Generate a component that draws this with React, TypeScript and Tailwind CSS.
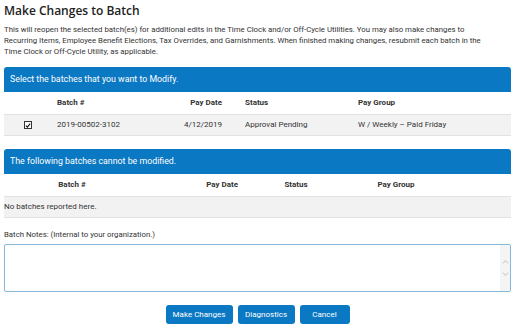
import React from 'react'

const blue = 'bg-[#0a78c2]'

function Checkbox() {
  return (
    <span className="inline-flex h-[8px] w-[8px] items-center justify-center border border-[#333] bg-white">
      <svg viewBox="0 0 10 10" className="h-[7px] w-[7px]">
        <path d="M1.5 5.2 L4 7.8 L8.6 1.8" fill="none" stroke="#111" strokeWidth="1.8" />
      </svg>
    </span>
  )
}

export default function App() {
  return (
    <div className="h-[329px] w-[515px] bg-white px-[4px] text-[#222]" style={{ fontFamily: 'Roboto, "Liberation Sans", sans-serif' }}>
      <h1
        className="pt-[2px] text-[12px] font-semibold leading-[17px] text-[#222]"
        style={{ fontFamily: '"Open Sans", "Liberation Sans", sans-serif' }}
      >
        Make Changes to Batch
      </h1>
      <p className="mt-[5px] pr-[10px] text-[7.8px] leading-[11px] text-[#333]">
        This will reopen the selected batch(es) for additional edits in the Time Clock and/or Off-Cycle Utilities. You may also make changes to
        <br />
        Recurring Items, Employee Benefit Elections, Tax Overrides, and Garnishments. When finished making changes, resubmit each batch in the
        <br />
        Time Clock or Off-Cycle Utility, as applicable.
      </p>

      {/* Modifiable batches */}
      <div className="mt-[10px]">
        <div className={`${blue} flex h-[25px] items-center rounded-t-[3px] px-[6px] text-[8.8px] text-white`}>
          Select the batches that you want to Modify.
        </div>
        <div className="grid h-[22px] grid-cols-[48px_120px_55px_126px_1fr] items-center text-[8px] font-bold text-[#333]">
          <div />
          <div className="pl-[5px]">Batch #</div>
          <div className="pr-[5px] text-right">Pay Date</div>
          <div className="pl-[18px]">Status</div>
          <div className="pl-[5px]">Pay Group</div>
        </div>
        <div className="grid h-[22px] grid-cols-[48px_120px_55px_126px_1fr] items-center border-y border-[#e2e2e2] bg-[#f2f2f2] text-[8px] text-[#333]">
          <div className="flex justify-center">
            <Checkbox />
          </div>
          <div className="pl-[5px]">2019-00502-3102</div>
          <div className="pr-[5px] text-right">4/12/2019</div>
          <div className="pl-[18px]">Approval Pending</div>
          <div className="pl-[5px]">W / Weekly – Paid Friday</div>
        </div>
      </div>

      {/* Non-modifiable batches */}
      <div className="mt-[13px]">
        <div className={`${blue} flex h-[25px] items-center rounded-t-[3px] px-[6px] text-[8.8px] text-white`}>
          The following batches cannot be modified.
        </div>
        <div className="grid h-[22px] grid-cols-[136px_112px_88px_112px_1fr] items-center text-[8px] font-bold text-[#333]">
          <div className="text-center">Batch #</div>
          <div className="pr-[14px] text-right">Pay Date</div>
          <div className="text-center">Status</div>
          <div className="text-center">Pay Group</div>
          <div />
        </div>
        <div className="flex h-[22px] items-center border-y border-[#e2e2e2] bg-[#f2f2f2] text-[8px] text-[#333]">
          No batches reported here.
        </div>
      </div>

      {/* Notes */}
      <div className="mt-[12px] text-[7.8px] leading-[10px] text-[#333]">Batch Notes: (Internal to your organization.)</div>
      <div className="mt-[4px] flex h-[48px] overflow-hidden rounded-[2px] border border-[#86b6d8] bg-white">
        <textarea className="h-full flex-1 resize-none p-[3px] text-[8px] outline-none" />
        <div className="flex w-[10px] flex-col items-center justify-center gap-[8px] bg-[#f4f4f4]">
          <svg viewBox="0 0 10 6" className="h-[4px] w-[7px]">
            <path d="M1 5 L5 1 L9 5" fill="none" stroke="#b5b5b5" strokeWidth="1.3" />
          </svg>
          <svg viewBox="0 0 10 6" className="h-[4px] w-[7px]">
            <path d="M1 1 L5 5 L9 1" fill="none" stroke="#b5b5b5" strokeWidth="1.3" />
          </svg>
        </div>
      </div>

      {/* Actions */}
      <div className="mt-[13px] flex justify-center gap-[5px]">
        <button className={`${blue} h-[19px] w-[67px] rounded-[3px] text-[8px] text-white`}>Make Changes</button>
        <button className={`${blue} h-[19px] w-[57px] rounded-[3px] text-[8px] text-white`}>Diagnostics</button>
        <button className={`${blue} h-[19px] w-[50px] rounded-[3px] text-[8px] text-white`}>Cancel</button>
      </div>
    </div>
  )
}
